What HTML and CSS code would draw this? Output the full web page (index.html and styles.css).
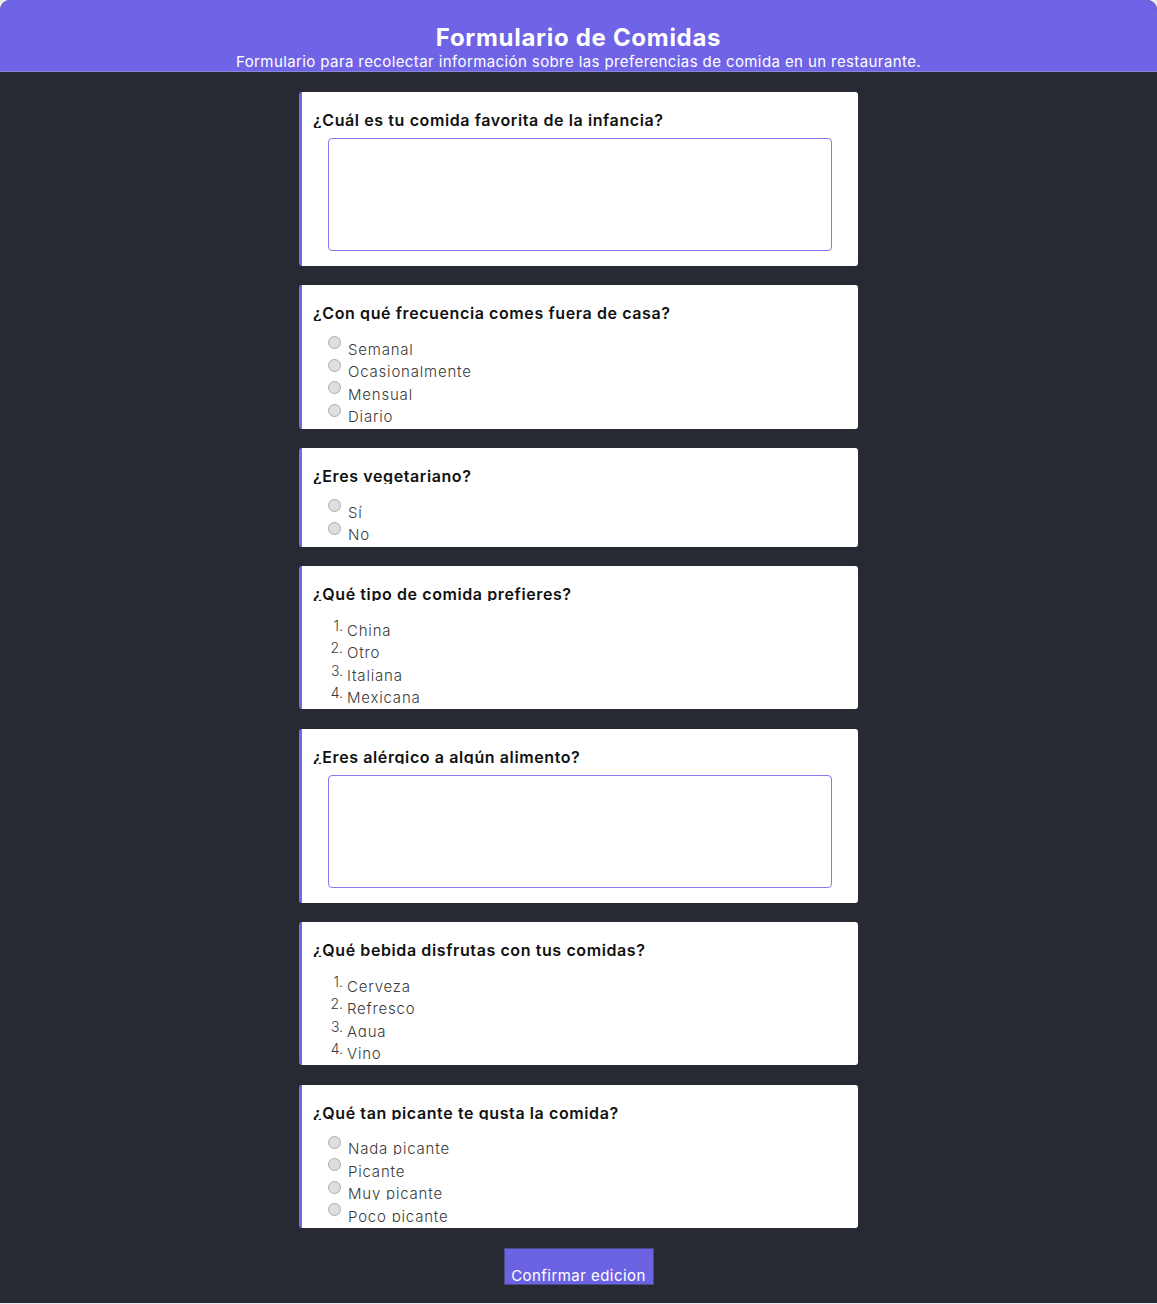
FILE: index.html
```html
<!DOCTYPE html>
<html lang="es">
<head>
<meta charset="utf-8">
<title>Formulario de Comidas</title>
<link rel="stylesheet" href="styles.css">
</head>
<body>
<div class="app">
  <header class="header">
    <h1 class="title">Formulario de Comidas</h1>
    <p class="subtitle">Formulario para recolectar información sobre las preferencias de comida en un restaurante.</p>
  </header>
  <main class="main">
    <section class="card">
      <h2 class="q">¿Cuál es tu comida favorita de la infancia?</h2>
      <textarea class="answer" disabled></textarea>
    </section>
    <section class="card">
      <h2 class="q">¿Con qué frecuencia comes fuera de casa?</h2>
      <div class="opts">
        <div class="opt"><input type="radio" disabled><span class="lbl">Semanal</span></div>
        <div class="opt"><input type="radio" disabled><span class="lbl">Ocasionalmente</span></div>
        <div class="opt"><input type="radio" disabled><span class="lbl">Mensual</span></div>
        <div class="opt"><input type="radio" disabled><span class="lbl">Diario</span></div>
      </div>
    </section>
    <section class="card">
      <h2 class="q">¿Eres vegetariano?</h2>
      <div class="opts">
        <div class="opt"><input type="radio" disabled><span class="lbl">Sí</span></div>
        <div class="opt"><input type="radio" disabled><span class="lbl">No</span></div>
      </div>
    </section>
    <section class="card">
      <h2 class="q">¿Qué tipo de comida prefieres?</h2>
      <ol class="opts">
        <li class="opt"><span class="num">1.</span><span class="lbl lbl-list">China</span></li>
        <li class="opt"><span class="num">2.</span><span class="lbl lbl-list">Otro</span></li>
        <li class="opt"><span class="num">3.</span><span class="lbl lbl-list">Italiana</span></li>
        <li class="opt"><span class="num">4.</span><span class="lbl lbl-list">Mexicana</span></li>
      </ol>
    </section>
    <section class="card">
      <h2 class="q">¿Eres alérgico a algún alimento?</h2>
      <textarea class="answer" disabled></textarea>
    </section>
    <section class="card">
      <h2 class="q">¿Qué bebida disfrutas con tus comidas?</h2>
      <ol class="opts">
        <li class="opt"><span class="num">1.</span><span class="lbl lbl-list">Cerveza</span></li>
        <li class="opt"><span class="num">2.</span><span class="lbl lbl-list">Refresco</span></li>
        <li class="opt"><span class="num">3.</span><span class="lbl lbl-list">Agua</span></li>
        <li class="opt"><span class="num">4.</span><span class="lbl lbl-list">Vino</span></li>
      </ol>
    </section>
    <section class="card">
      <h2 class="q">¿Qué tan picante te gusta la comida?</h2>
      <div class="opts">
        <div class="opt"><input type="radio" disabled><span class="lbl">Nada picante</span></div>
        <div class="opt"><input type="radio" disabled><span class="lbl">Picante</span></div>
        <div class="opt"><input type="radio" disabled><span class="lbl">Muy picante</span></div>
        <div class="opt"><input type="radio" disabled><span class="lbl">Poco picante</span></div>
      </div>
    </section>
    <button class="confirm" type="button">Confirmar edicion</button>
  </main>
</div>
</body>
</html>
```

FILE: styles.css
```css
html, body {
  margin: 0;
  padding: 0;
  background: #ececec;
}
body {
  font-family: Inter, "Noto Sans", "DejaVu Sans", sans-serif;
}
.app {
  background: #282a33;
  border-radius: 10px 10px 0 0;
  overflow: hidden;
}
.header {
  background: #6f64e6;
  border-bottom: 1px solid #8c86d6;
  text-align: center;
  color: #fff;
  padding: 23px 0 0;
  height: 72px;
  box-sizing: border-box;
  overflow: hidden;
}
.title {
  margin: 0;
  font-size: 24px;
  line-height: 29px;
  font-weight: 700;
  letter-spacing: 0.7px;
}
.subtitle {
  margin: 1px 0 0;
  font-size: 15px;
  line-height: 17px;
  font-weight: 400;
  letter-spacing: 0.4px;
}
.main {
  display: flex;
  flex-direction: column;
  align-items: center;
  gap: 19.3px;
  padding: 20px 0 18px;
}
.card {
  width: 559px;
  box-sizing: border-box;
  background: #fff;
  border-left: 3px solid #7467ee;
  border-radius: 3px;
  padding: 21px 11px 2.5px;
}
.q {
  margin: 0;
  font-size: 16px;
  line-height: 15px;
  height: 14.5px;
  overflow: hidden;
  font-weight: 600;
  color: #111;
  letter-spacing: 0.6px;
  white-space: nowrap;
}
.answer {
  display: block;
  margin: 10.5px 15px 12.5px;
  width: 504px;
  height: 113px;
  box-sizing: border-box;
  border: 1px solid #857bef;
  border-radius: 4px;
  background: #fff;
  resize: none;
  padding: 0;
}
.opts {
  list-style: none;
  margin: 15.5px 0 0;
  padding: 0;
}
.opt {
  display: flex;
  align-items: flex-start;
  height: 22.5px;
  padding-left: 15px;
}
.opt input {
  appearance: none;
  -webkit-appearance: none;
  margin: 0 7px 0 0;
  width: 13px;
  height: 13px;
  box-sizing: border-box;
  border-radius: 50%;
  border: 1px solid #ababab;
  background: #dedede;
  flex: none;
}
.lbl {
  display: block;
  margin-top: 5.5px;
  height: 13.5px;
  line-height: 15px;
  overflow: hidden;
  font-size: 15px;
  font-weight: 300;
  color: #3a3a3a;
  letter-spacing: 0.8px;
  white-space: nowrap;
}
.num {
  width: 15px;
  flex: none;
  text-align: right;
  font-size: 14px;
  line-height: 14px;
  margin-top: 2px;
  font-weight: 300;
  color: #3a3a3a;
}
.lbl-list {
  margin-left: 4px;
  margin-top: 6px;
}
.confirm {
  width: 150px;
  height: 37px;
  box-sizing: border-box;
  background: #6c63e3;
  border: 1px solid #4b4a8a;
  color: #fff;
  font-family: inherit;
  font-size: 15px;
  line-height: 18px;
  padding: 18px 0 0;
  text-align: center;
  letter-spacing: 0.45px;
  white-space: nowrap;
  cursor: pointer;
}
```
